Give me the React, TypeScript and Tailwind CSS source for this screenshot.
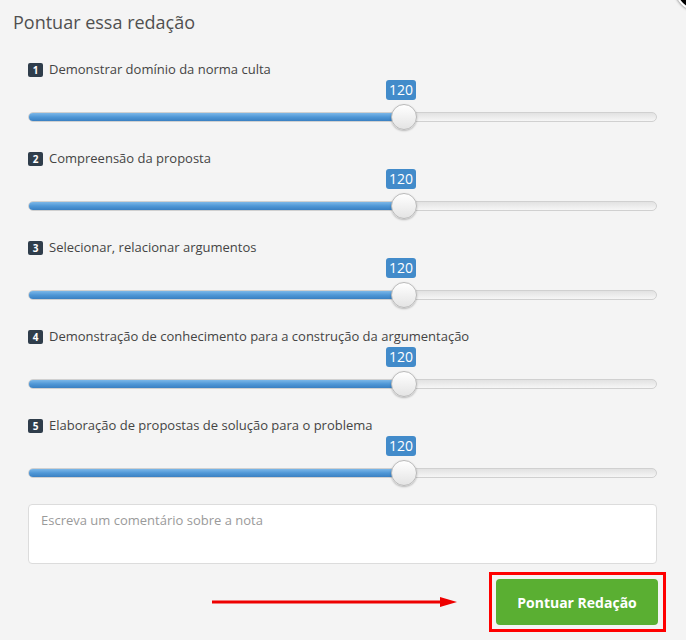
import React from "react";

interface Criterion {
  id: number;
  label: string;
  value: number;
}

const criteria: Criterion[] = [
  { id: 1, label: "Demonstrar domínio da norma culta", value: 120 },
  { id: 2, label: "Compreensão da proposta", value: 120 },
  { id: 3, label: "Selecionar, relacionar argumentos", value: 120 },
  { id: 4, label: "Demonstração de conhecimento para a construção da argumentação", value: 120 },
  { id: 5, label: "Elaboração de propostas de solução para o problema", value: 120 },
];

function ScoreSlider({ value }: { value: number }) {
  // handle sits at 376px of the 629px track for 120 pts
  const pos = Math.round((value / 120) * 376);

  return (
    <div className="relative h-[51px] w-[629px] pt-[32px]">
      <div
        className="absolute top-0 h-[20px] w-[30px] rounded-[3px] bg-[#428bca] text-center text-[14px] leading-[20px] text-white"
        style={{ left: pos - 18 }}
      >
        {value}
      </div>
      <div className="h-[10px] overflow-hidden rounded-full border border-[#d0d0d0] bg-gradient-to-b from-[#e2e2e2] to-[#f6f6f6]">
        <div
          className="h-full bg-gradient-to-b from-[#7bb7e8] via-[#4f97d6] to-[#3a80c2]"
          style={{ width: pos }}
        />
      </div>
      <div
        className="absolute top-[24px] h-[26px] w-[26px] rounded-full border border-[#b9b9b9] bg-gradient-to-b from-[#ffffff] to-[#e4e4e4] shadow-[0_1px_2px_rgba(0,0,0,0.25)]"
        style={{ left: pos - 13 }}
      />
    </div>
  );
}

export default function App() {
  return (
    <div className="relative flex h-[640px] w-[686px] flex-col overflow-hidden bg-[#f4f4f4] font-['Open_Sans',sans-serif]">
      <div className="absolute left-[674px] top-[-40px] h-[52px] w-[52px] rounded-full border-2 border-white bg-black shadow-[0_0_3px_rgba(0,0,0,0.6)]" />

      <h2 className="pl-[13px] pt-[10px] text-[18px] leading-[24px] text-[#505050]">Pontuar essa redação</h2>

      <div className="mt-[27px] flex flex-col gap-[19px] pl-[28px]">
        {criteria.map((c) => (
          <div key={c.id} className="flex flex-col gap-[1px]">
            <div className="flex h-[18px] items-center gap-[6px] text-[13px] text-[#444]">
              <span className="flex h-[14px] w-[15px] items-center justify-center rounded-[2px] bg-[#2f3d4b] text-[10px] font-bold leading-none text-white">
                {c.id}
              </span>
              <span>{c.label}</span>
            </div>
            <ScoreSlider value={c.value} />
          </div>
        ))}
      </div>

      <div className="mt-[17px] pl-[28px]">
        <textarea
          placeholder="Escreva um comentário sobre a nota"
          className="block h-[60px] w-[629px] resize-none rounded-[4px] border border-[#dcdcdc] bg-white px-[12px] py-[6px] text-[13px] text-[#555] outline-none placeholder:text-[#9a9a9a]"
        />
      </div>

      <div className="mt-[8px] flex items-center justify-end pr-[20px]">
        <svg width="245" height="12" viewBox="0 0 245 12" className="mr-[32px]">
          <line x1="0" y1="6" x2="230" y2="6" stroke="#ee0000" strokeWidth="3" />
          <polygon points="228,1 245,6 228,11" fill="#ee0000" />
        </svg>
        <div className="border-[3px] border-[#ff0000] p-[4px] pr-[5px]">
          <button className="h-[46px] w-[162px] rounded-[4px] bg-[#5aaf32] text-[14px] font-bold text-white">
            Pontuar Redação
          </button>
        </div>
      </div>
    </div>
  );
}
